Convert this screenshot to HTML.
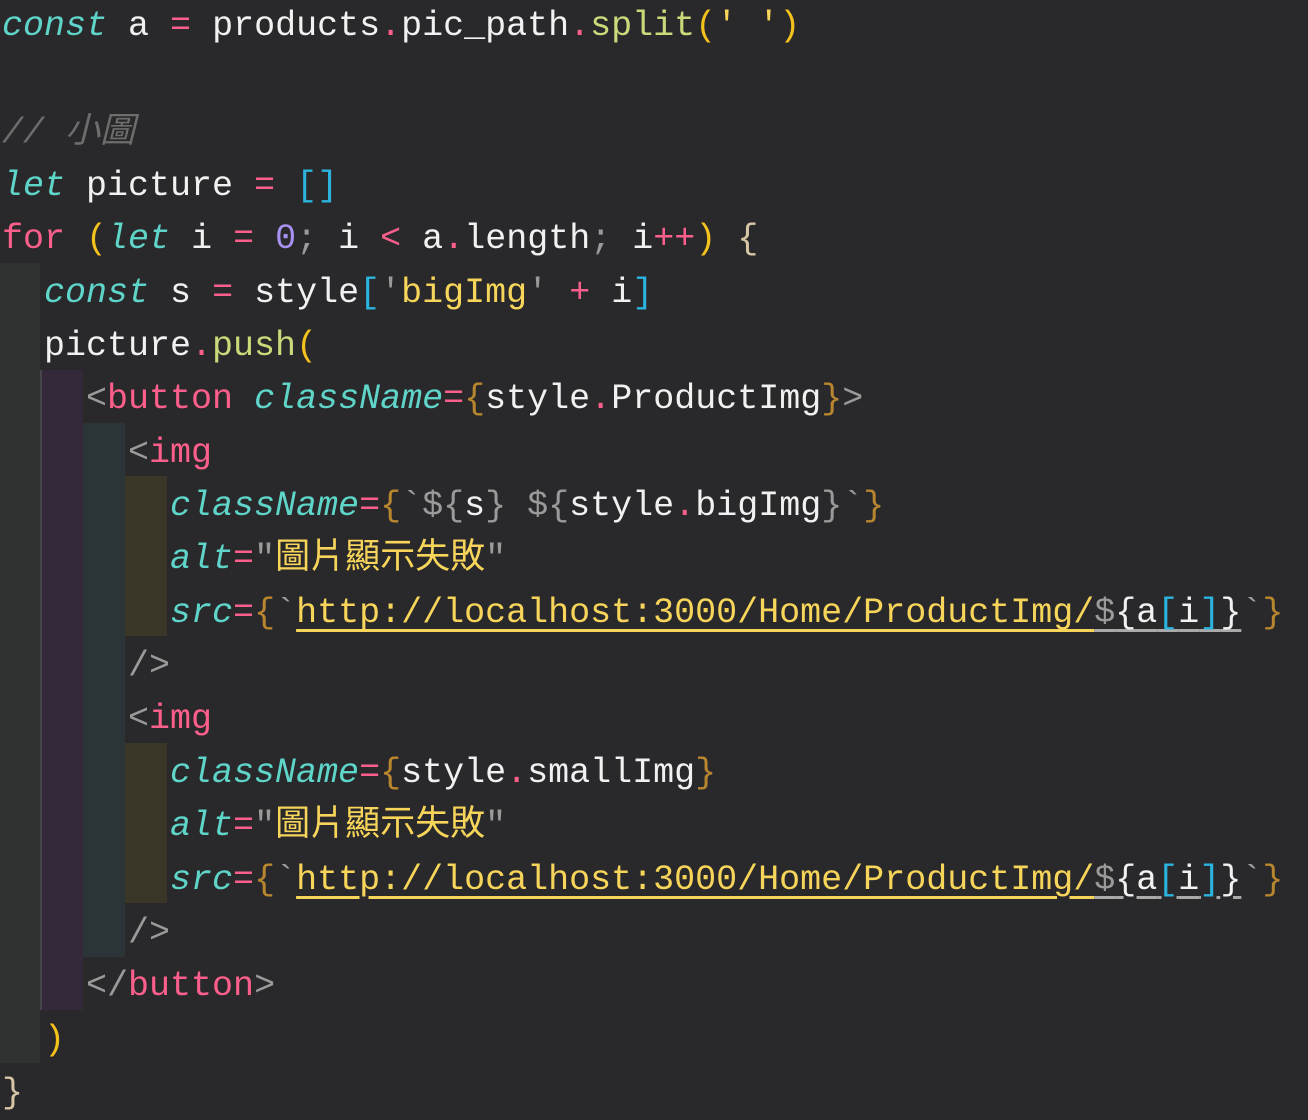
<!DOCTYPE html>
<html><head><meta charset="utf-8"><style>
html,body{margin:0;padding:0;background:#29282b;width:1308px;height:1108px;overflow:hidden}
.b{position:absolute}
pre{position:absolute;left:2px;top:0px;margin:0;font-family:"Liberation Mono","Noto Sans CJK TC",monospace;font-size:35px;line-height:53.35px;color:#f1f1f1;white-space:pre}
.k{color:#5fd4c8;font-style:italic}
.r{color:#fc5f8b}
.y{color:#f7d55a}
.g{color:#9a9a9a}
.c{color:#6d6d6d;font-style:italic}
.cy{color:#2bb4de}
.p{color:#a891f0}
.f{color:#c9da7a}
.o{color:#b8862e}
.yp{color:#f3c21d}
.t{color:#d6c6a6}
.u{text-decoration:underline;text-decoration-color:#f7d55a;text-decoration-thickness:3px;text-underline-offset:7px}
.ug{text-decoration:underline;text-decoration-color:#aaa;text-decoration-thickness:3px;text-underline-offset:7px}
</style></head><body>
<div class="b" style="left:0;top:263px;width:40px;height:800px;background:#303231"></div>
<div class="b" style="left:40px;top:370px;width:2px;height:640px;background:#45464a"></div>
<div class="b" style="left:42px;top:370px;width:41px;height:640px;background:#33293a"></div>
<div class="b" style="left:83px;top:423px;width:42px;height:534px;background:#2b3538"></div>
<div class="b" style="left:125px;top:476px;width:42px;height:160px;background:#3a3628"></div>
<div class="b" style="left:125px;top:743px;width:42px;height:160px;background:#3a3628"></div>
<pre><span class="k">const</span> a <span class="r">=</span> products<span class="r">.</span>pic_path<span class="r">.</span><span class="f">split</span><span class="yp">(</span><span class="y">' '</span><span class="yp">)</span>

<span class="c">// 小圖</span>
<span class="k">let</span> picture <span class="r">=</span> <span class="cy">[]</span>
<span class="r">for</span> <span class="yp">(</span><span class="k">let</span> i <span class="r">=</span> <span class="p">0</span><span class="g">;</span> i <span class="r">&lt;</span> a<span class="r">.</span>length<span class="g">;</span> i<span class="r">++</span><span class="yp">)</span> <span class="t">{</span>
  <span class="k">const</span> s <span class="r">=</span> style<span class="cy">[</span><span class="g">'</span><span class="y">bigImg</span><span class="g">'</span> <span class="r">+</span> i<span class="cy">]</span>
  picture<span class="r">.</span><span class="f">push</span><span class="yp">(</span>
    <span class="g">&lt;</span><span class="r">button</span> <span class="k">className</span><span class="r">=</span><span class="o">{</span>style<span class="r">.</span>ProductImg<span class="o">}</span><span class="g">&gt;</span>
      <span class="g">&lt;</span><span class="r">img</span>
        <span class="k">className</span><span class="r">=</span><span class="o">{</span><span class="g">`${</span>s<span class="g">}</span> <span class="g">${</span>style<span class="r">.</span>bigImg<span class="g">}`</span><span class="o">}</span>
        <span class="k">alt</span><span class="r">=</span><span class="g">"</span><span class="y">圖片顯示失敗</span><span class="g">"</span>
        <span class="k">src</span><span class="r">=</span><span class="o">{</span><span class="g">`</span><span class="y u">http://localhost:3000/Home/ProductImg/</span><span class="ug"><span class="g">$</span>{a<span class="cy">[</span>i<span class="cy">]</span>}</span><span class="g">`</span><span class="o">}</span>
      <span class="g">/&gt;</span>
      <span class="g">&lt;</span><span class="r">img</span>
        <span class="k">className</span><span class="r">=</span><span class="o">{</span>style<span class="r">.</span>smallImg<span class="o">}</span>
        <span class="k">alt</span><span class="r">=</span><span class="g">"</span><span class="y">圖片顯示失敗</span><span class="g">"</span>
        <span class="k">src</span><span class="r">=</span><span class="o">{</span><span class="g">`</span><span class="y u">http://localhost:3000/Home/ProductImg/</span><span class="ug"><span class="g">$</span>{a<span class="cy">[</span>i<span class="cy">]</span>}</span><span class="g">`</span><span class="o">}</span>
      <span class="g">/&gt;</span>
    <span class="g">&lt;/</span><span class="r">button</span><span class="g">&gt;</span>
  <span class="yp">)</span>
<span class="t">}</span></pre>
</body></html>
